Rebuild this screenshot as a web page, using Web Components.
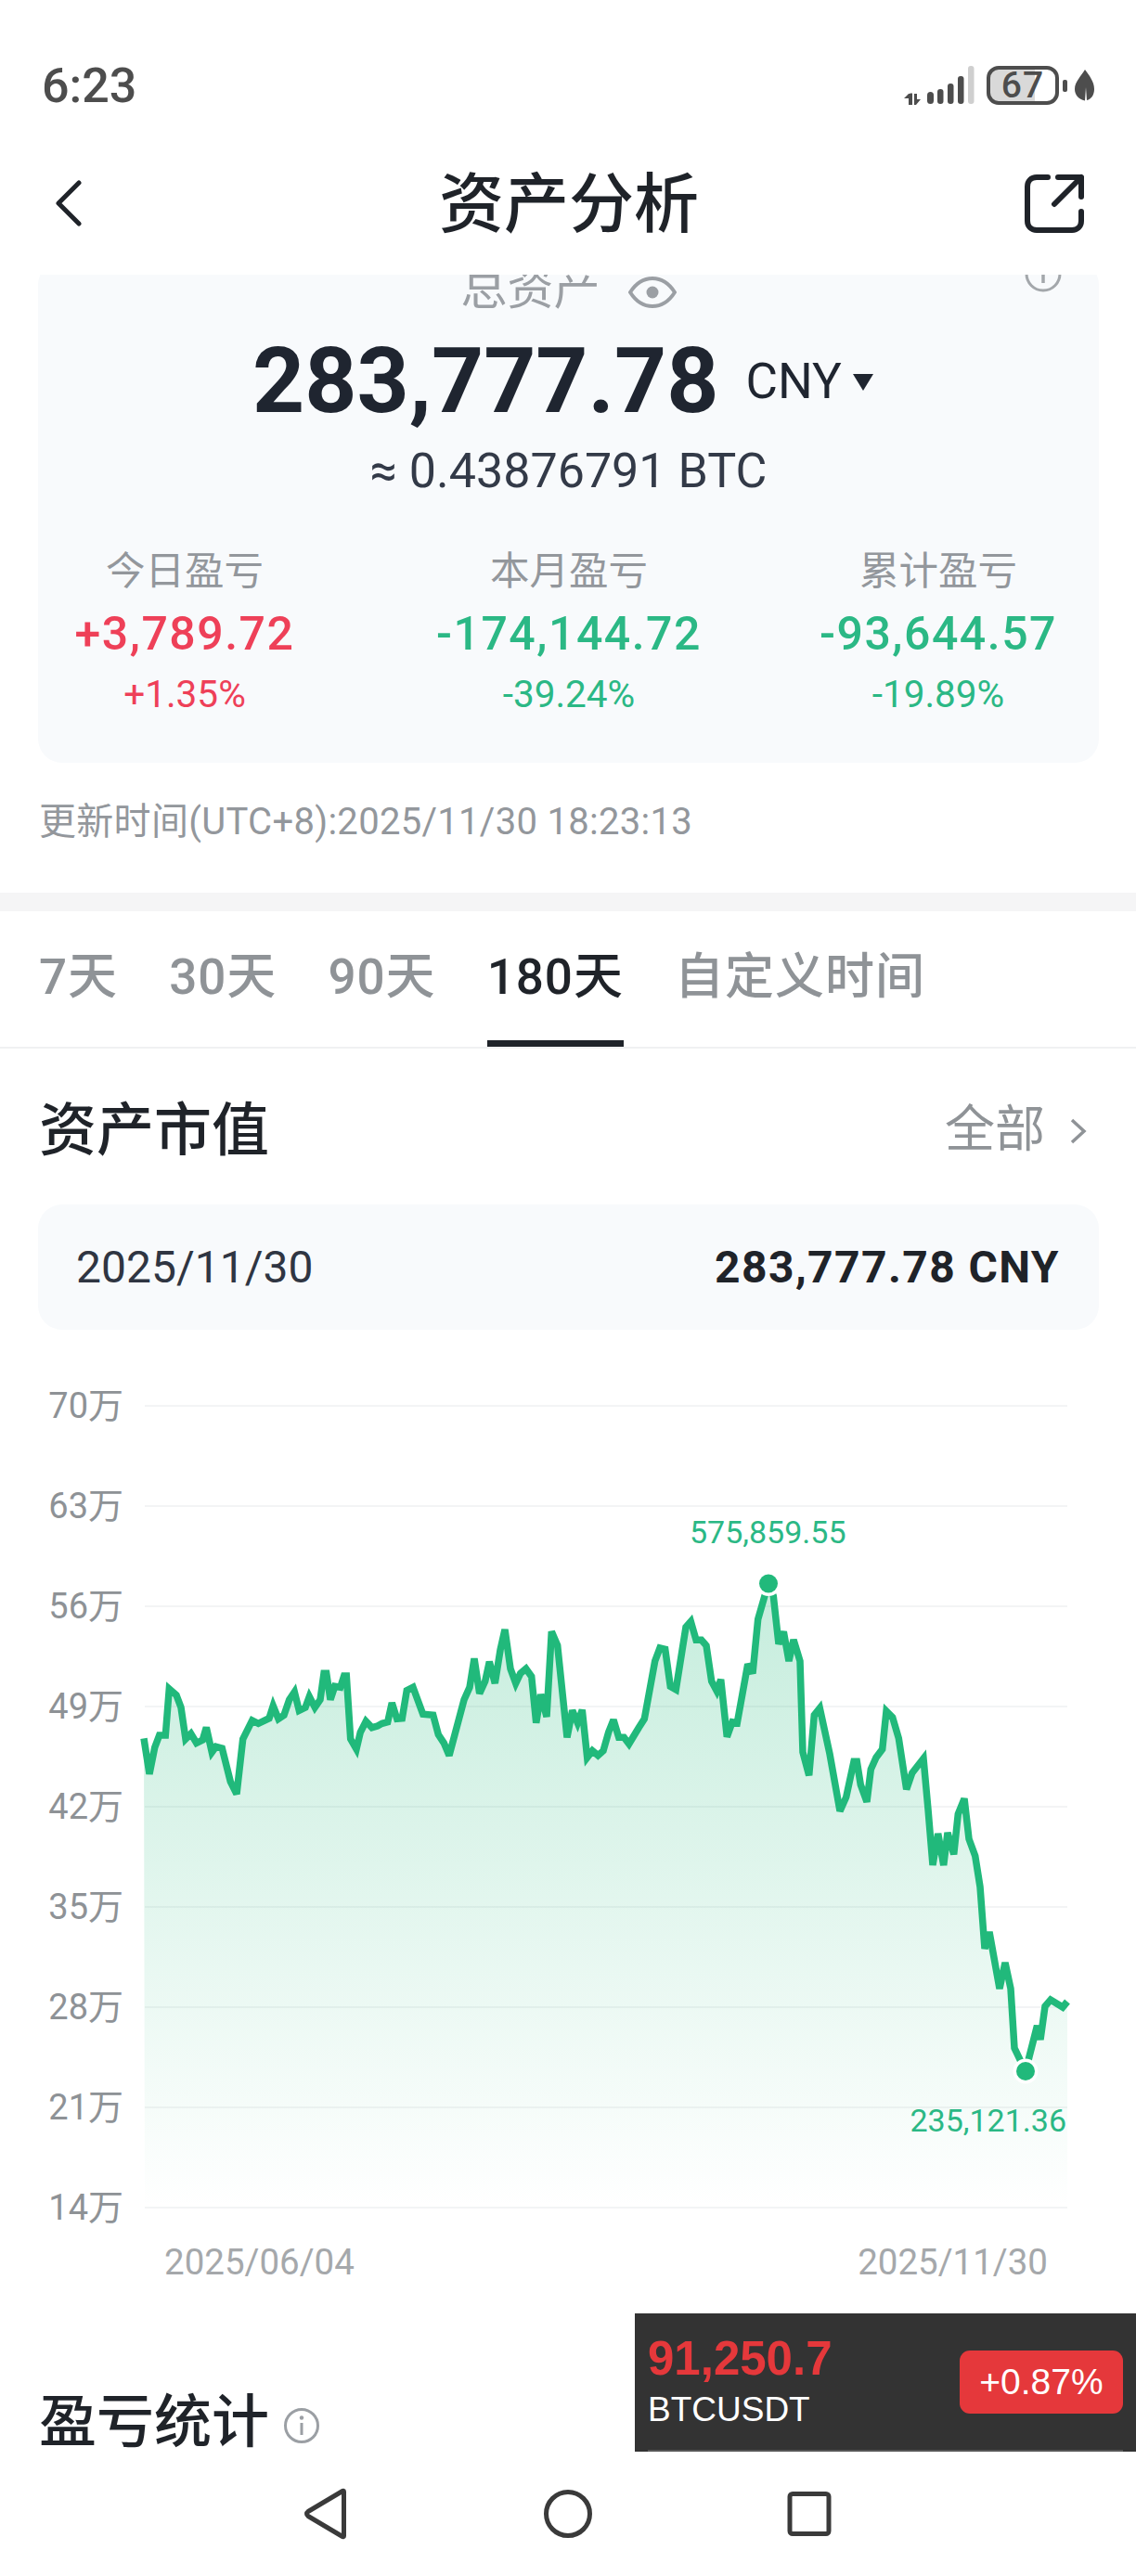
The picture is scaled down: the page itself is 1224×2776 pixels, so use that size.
<!DOCTYPE html>
<html lang="zh-CN">
<head>
<meta charset="utf-8">
<title>资产分析</title>
<style>
  html, body { margin: 0; padding: 0; background: #fff; }
  body {
    width: 1224px;
    height: 2776px;
    overflow: hidden;
    font-family: Roboto, "Noto Sans CJK SC", sans-serif;
    color: #1f2329;
  }
  asset-page { height: 2776px; }
</style>
</head>
<body>
<asset-page>
  <status-bar time="6:23" battery="67"></status-bar>
  <nav-header>资产分析</nav-header>

  <scroll-area>
    <summary-card>
      <stat-item slot="stats" tone="up" label="今日盈亏" value="+3,789.72" pct="+1.35%"></stat-item>
      <stat-item slot="stats" tone="down" label="本月盈亏" value="-174,144.72" pct="-39.24%"></stat-item>
      <stat-item slot="stats" tone="down" label="累计盈亏" value="-93,644.57" pct="-19.89%"></stat-item>
    </summary-card>
    <update-time>更新时间(UTC+8):2025/11/30 18:23:13</update-time>
    <range-tabs active="3">
      <span>7天</span><span>30天</span><span>90天</span><span>180天</span><span>自定义时间</span>
    </range-tabs>
    <section-title more="全部" style="margin-top:49px">资产市值</section-title>
    <value-row date="2025/11/30" value="283,777.78 CNY"></value-row>
    <asset-chart></asset-chart>
    <section-title info="true" style="height:64px;margin-top:116px">盈亏统计</section-title>
  </scroll-area>

  <ticker-float price="91,250.7" symbol="BTCUSDT" change="+0.87%"></ticker-float>
  <system-nav></system-nav>
</asset-page>

<script>
class AssetPage extends HTMLElement {
  constructor() {
    super();
    this.attachShadow({ mode: "open" });
  }
  connectedCallback() {
    this.shadowRoot.innerHTML = `
      <style>
        :host { display: flex; flex-direction: column; position: relative; width: 1224px; background: #fff; overflow: hidden; }
      </style>
      <slot></slot>
    `;
  }
}

class StatusBar extends HTMLElement {
  constructor() {
    super();
    this.attachShadow({ mode: "open" });
  }
  connectedCallback() {
    const time = this.getAttribute("time");
    const battery = this.getAttribute("battery");
    this.shadowRoot.innerHTML = `
      <style>
        :host { display: flex; align-items: center; justify-content: space-between; box-sizing: border-box; height: 142px; padding: 44px 45px 0 45px; color: #4d4d4d; }
        .time { font-size: 52px; font-weight: 500; line-height: 98px; }
        .right { display: flex; align-items: center; margin-top: -2px; }
        .batt {
          box-sizing: border-box; width: 78px; height: 42px; margin-left: 13px; border: 4px solid #4d4d4d; border-radius: 13px;
          background: linear-gradient(to right, #d9d9d9 0 69%, #fff 69% 100%);
          display: flex; align-items: center; justify-content: center;
          font-size: 39px; font-weight: 500; line-height: 34px; letter-spacing: 1px;
        }
      </style>
      <div class="time">${time}</div>
      <div class="right">
        <svg width="76" height="42" viewBox="0 0 76 42">
          <g fill="#4d4d4d">
            <path d="M0 35l5-5h1.500v-0.500h2.500v12.500h-4v-7z"/>
            <path d="M11 30h3v6l4 0-5 6h-2z"/>
            <rect x="25" y="28" width="7" height="13" rx="3.500"/>
            <rect x="36" y="25" width="6.500" height="16" rx="3"/>
            <rect x="47" y="19" width="6.500" height="22" rx="3"/>
            <rect x="58" y="11" width="6.500" height="30" rx="3"/>
          </g>
          <rect x="69" y="0" width="6.500" height="41" rx="3" fill="#cfcfcf"/>
        </svg>
        <div class="batt">${battery}</div>
        <svg width="34" height="36" viewBox="0 0 34 36" style="margin-left:4px">
          <rect x="0" y="12" width="5" height="13" rx="2" fill="#4d4d4d"/>
          <path d="M24 1C29 8 34 14 34 22c0 6-3 11-8 12l-1-14-1 14.500C17 33 13 28 13 22 13 14 20 8 24 1z" fill="#4d4d4d"/>
        </svg>
      </div>
    `;
  }
}

class NavHeader extends HTMLElement {
  constructor() {
    super();
    this.attachShadow({ mode: "open" });
  }
  connectedCallback() {
    this.shadowRoot.innerHTML = `
      <style>
        :host { display: grid; grid-template-columns: 1fr auto 1fr; align-items: center; box-sizing: border-box; height: 154px; padding: 0 56px 0 58px; background: #fff; position: relative; z-index: 1; }
        .title { font-size: 70px; font-weight: 500; line-height: 90px; margin-top: 4px; color: #1f2329; }
        svg { display: block; }
        .share { justify-self: end; }
      </style>
      <svg width="32" height="50" viewBox="0 0 32 50"><path d="M27 3L5 25l22 22" fill="none" stroke="#1f2329" stroke-width="5" stroke-linecap="round" stroke-linejoin="round"/></svg>
      <div class="title"><slot></slot></div>
      <svg class="share" width="64" height="64" viewBox="0 0 64 64">
        <path d="M25 4H13C7 4 3 8 3 14v37c0 6 4 10 10 10h38c6 0 10-4 10-10V41" fill="none" stroke="#1f2329" stroke-width="6" stroke-linecap="round"/>
        <path d="M36 4h25v21M61 4L32 33" fill="none" stroke="#1f2329" stroke-width="6" stroke-linecap="round" stroke-linejoin="round"/>
      </svg>
    `;
  }
}

class ScrollArea extends HTMLElement {
  constructor() {
    super();
    this.attachShadow({ mode: "open" });
  }
  connectedCallback() {
    this.shadowRoot.innerHTML = `
      <style>
        :host { display: block; height: 2346px; }
      </style>
      <slot></slot>
    `;
  }
}

class SummaryCard extends HTMLElement {
  constructor() {
    super();
    this.attachShadow({ mode: "open" });
  }
  connectedCallback() {
    this.shadowRoot.innerHTML = `
      <style>
        :host { display: block; position: relative; box-sizing: border-box; margin: -15px 40px 0 41px; height: 541px; background: #f8fafc; border-radius: 26px; text-align: center; }
        .head { display: flex; align-items: center; justify-content: center; height: 60px; font-size: 50px; line-height: 60px; color: #9b9fa4; }
        .head svg { margin-left: 30px; margin-top: 8px; }
        .tip { position: absolute; top: -6px; right: 40px; }
        .amount { display: flex; align-items: center; justify-content: center; height: 120px; margin-top: 10px; padding-right: 12px; line-height: 120px; color: #1f2530; }
        .big { font-size: 98px; font-weight: 700; }
        .cny { font-size: 53px; margin-left: 29px; }
        .tri { display: inline-block; width: 0; height: 0; margin-left: 12px; border-left: 11px solid transparent; border-right: 11px solid transparent; border-top: 18px solid #1f2530; position: relative; top: 1px; }
        .btc { height: 60px; margin-top: 7px; font-size: 52px; line-height: 60px; color: #333a48; }
        .stats { display: grid; grid-template-columns: 316px 512px 284px; margin-top: 48px; }
      </style>
      <div class="head">总资产
        <svg width="52" height="36" viewBox="0 0 52 36"><path d="M2 18C9 7 17 3 26 3s17 4 24 15c-7 11-15 15-24 15S9 29 2 18z" fill="none" stroke="#9b9fa4" stroke-width="4"/><circle cx="26" cy="18" r="6.500" fill="#9b9fa4"/></svg>
      </div>
      <svg class="tip" width="40" height="40" viewBox="0 0 40 40"><circle cx="20" cy="20" r="18" fill="none" stroke="#a3a7ab" stroke-width="3"/><path d="M20 17v13" stroke="#a3a7ab" stroke-width="3.500"/></svg>
      <div class="amount"><span class="big">283,777.78</span><span class="cny">CNY</span><span class="tri"></span></div>
      <div class="btc">≈ 0.43876791 BTC</div>
      <div class="stats"><slot name="stats"></slot></div>
    `;
  }
}

class StatItem extends HTMLElement {
  constructor() {
    super();
    this.attachShadow({ mode: "open" });
  }
  connectedCallback() {
    const label = this.getAttribute("label");
    const value = this.getAttribute("value");
    const pct = this.getAttribute("pct");
    const color = this.getAttribute("tone") == "up" ? "#ee4058" : "#2bb885";
    this.shadowRoot.innerHTML = `
      <style>
        :host { display: block; text-align: center; }
        .label { height: 60px; font-size: 42.500px; line-height: 60px; color: #93979c; }
        .value { height: 70px; margin-top: 2px; font-size: 50px; font-weight: 500; line-height: 70px; letter-spacing: 1.500px; color: ${color}; }
        .pct { height: 50px; margin-top: 5px; font-size: 40.500px; line-height: 50px; color: ${color}; }
      </style>
      <div class="label">${label}</div>
      <div class="value">${value}</div>
      <div class="pct">${pct}</div>
    `;
  }
}

class UpdateTime extends HTMLElement {
  constructor() {
    super();
    this.attachShadow({ mode: "open" });
  }
  connectedCallback() {
    this.shadowRoot.innerHTML = `
      <style>
        :host { display: block; height: 50px; margin-top: 39px; padding-bottom: 51px; border-bottom: 20px solid #f5f5f6; padding-left: 42px; font-size: 40px; letter-spacing: 0.300px; line-height: 50px; color: #93979c; }
      </style>
      <slot></slot>
    `;
  }
}

class RangeTabs extends HTMLElement {
  constructor() {
    super();
    this.attachShadow({ mode: "open" });
  }
  connectedCallback() {
    const active = Number(this.getAttribute("active"));
    const items = Array.from(this.querySelectorAll("span"));
    const tabs = items.map((item, i) => `<div class="tab ${i == active ? "on" : ""}">${item.textContent}</div>`).join("");
    this.shadowRoot.innerHTML = `
      <style>
        :host { display: flex; gap: 55px; box-sizing: border-box; height: 148px; padding: 0 42px; border-bottom: 2px solid #f0f1f2; }
        .tab { box-sizing: border-box; height: 146px; padding-top: 41px; font-size: 53px; letter-spacing: 1px; font-weight: 500; line-height: 60px; color: #8f9397; }
        .tab.on { color: #1f2329; border-bottom: 7px solid #1f2329; }
      </style>
      ${tabs}
    `;
  }
}

class SectionTitle extends HTMLElement {
  constructor() {
    super();
    this.attachShadow({ mode: "open" });
  }
  connectedCallback() {
    const more = this.getAttribute("more");
    const info = this.getAttribute("info");
    let more_html = "";
    if (more) {
      more_html = `<div class="more">${more}<svg width="20" height="30" viewBox="0 0 20 30"><path d="M3 3l13 12L3 27" fill="none" stroke="#8f9397" stroke-width="3.500"/></svg></div>`;
    }
    let info_html = "";
    if (info == "true") {
      info_html = `<svg class="info" width="40" height="40" viewBox="0 0 40 40"><circle cx="20" cy="20" r="17.500" fill="none" stroke="#9b9fa4" stroke-width="3"/><circle cx="20" cy="11.500" r="2.200" fill="#9b9fa4"/><path d="M20 17v13" stroke="#9b9fa4" stroke-width="3"/></svg>`;
    }
    this.shadowRoot.innerHTML = `
      <style>
        :host { display: flex; align-items: center; justify-content: space-between; height: 80px; padding: 0 50px 0 42px; }
        .left { display: flex; align-items: center; font-size: 62px; font-weight: 500; line-height: 64px; color: #1f2329; }
        .info { margin-left: 15px; margin-top: 6px; }
        .more { display: flex; align-items: center; font-size: 54px; line-height: 64px; color: #8f9397; margin-top: -3px; }
        .more svg { margin-left: 26px; margin-right: 2px; margin-top: 3px; }
      </style>
      <div class="left"><slot></slot>${info_html}</div>
      ${more_html}
    `;
  }
}

class ValueRow extends HTMLElement {
  constructor() {
    super();
    this.attachShadow({ mode: "open" });
  }
  connectedCallback() {
    this.shadowRoot.innerHTML = `
      <style>
        :host { display: flex; align-items: center; justify-content: space-between; box-sizing: border-box; height: 135px; margin: 39px 40px 0 41px; padding: 0 42px 0 41px; background: #f8fafc; border-radius: 26px; font-size: 48px; }
        .date { color: #2f3542; }
        .val { font-weight: 700; letter-spacing: 1.400px; color: #1f2329; }
      </style>
      <div class="date">${this.getAttribute("date")}</div>
      <div class="val">${this.getAttribute("value")}</div>
    `;
  }
}

// points traced from the reference, per crop, then mapped to page coords
const part_a = [[15,460],[33,575],[50,490],[65,450],[85,450],[97,300],[120,320],[135,360],[150,462],[167,445],[185,475],[205,465],[217,425],[235,505],[248,487],[268,492],[295,600],[315,640],[335,462],[365,402],[385,412],[420,395],[433,355],[450,397],[468,385],[485,335],[502,310],[517,370],[537,360],[550,325],[568,360],[585,335],[597,250],[605,250],[618,335],[632,292],[650,295],[662,258],[670,258],[683,462],[702,495],[715,440],[733,405],[752,425],[770,420],[785,412],[803,407],[817,345],[833,397],[850,395],[865,305],[885,295],[917,382],[950,385],[967,448],[985,475],[1002,515],[1050,335]]
  .map(([x, y]) => [150 + x / 3, 1720 + y / 3]);
const part_b = [[18,385],[33,292],[50,405],[68,365],[82,302],[100,372],[117,265],[132,198],[150,325],[167,372],[182,340],[200,325],[218,350],[233,500],[248,408],[267,480],[283,205],[302,250],[333,547],[350,460],[367,500],[382,458],[398,612],[415,590],[433,605],[450,590],[467,530],[483,490],[500,547],[517,547],[533,568],[565,515],[583,487],[617,300],[633,258],[650,262],[667,382],[685,392],[717,190],[733,172],[750,232],[767,232],[783,250],[800,365],[817,397],[830,360],[850,545],[867,497],[883,500],[917,310],[933,340],[950,165],[983,50],[1000,90],[1017,245],[1033,205],[1050,300]]
  .map(([x, y]) => [500 + x / 3, 1690 + y / 3]);
const part_c = [[855,1767],[862,1790]];
const part_d = [[135,205],[155,280],[172,85],[190,62],[222,210],[255,395],[275,350],[300,235],[310,235],[322,310],[342,365],[355,260],[372,222],[392,195],[405,72],[425,92],[445,160],[470,325],[488,272],[525,225],[540,390],[555,570],[572,468],[590,570],[603,465],[623,535],[637,405],[657,355],[672,485],[692,540],[708,640]]
  .map(([x, y]) => [820 + x / 3, 1820 + y / 3]);
const part_e = [[1061,2100],[1066,2082],[1077,2143],[1083,2115],[1089,2143],[1093,2207],[1105,2232],[1117.5,2183],[1121,2198],[1126,2162],[1132,2155],[1145,2163],[1150,2157]];
const CHART_POINTS = part_a.concat(part_b, part_c, part_d, part_e);

class AssetChart extends HTMLElement {
  constructor() {
    super();
    this.attachShadow({ mode: "open" });
  }
  connectedCallback() {
    const ticks = ["70万", "63万", "56万", "49万", "42万", "35万", "28万", "21万", "14万"];
    const line = CHART_POINTS.map((p) => p[0].toFixed(1) + "," + p[1].toFixed(1)).join(" ");
    const area = "156,2379 " + line + " 1150,2379";
    const grid = ticks.map((t, i) => {
      const y = 1515 + i * 108;
      return `<line x1="156" x2="1150" y1="${y}" y2="${y}" stroke="#f3f4f5" stroke-width="2"/>`;
    }).join("");
    this.shadowRoot.innerHTML = `
      <style>
        :host { display: block; margin-top: 62px; }
        .plot { display: grid; position: relative; height: 904px; }
        .plot > * { grid-area: 1 / 1; }
        svg { display: block; width: 1224px; height: 904px; overflow: visible; }
        .axis { display: flex; flex-direction: column; justify-content: space-between; width: 133px; text-align: right; }
        .axis div { height: 40px; font-size: 38px; line-height: 40px; color: #8e9296; }
        .mark { position: absolute; font-size: 34px; line-height: 40px; color: #2bb885; white-space: nowrap; }
        .hi { left: 743px; top: 136px; }
        .lo { right: 75px; top: 770px; }
        .dates { display: flex; justify-content: space-between; height: 50px; margin-top: 14px; padding: 0 95px 0 177px; font-size: 38.500px; line-height: 50px; color: #a5a8ab; }
      </style>
      <div class="plot">
        <svg viewBox="0 1495 1224 904">
          <defs>
            <linearGradient id="fade" gradientUnits="userSpaceOnUse" x1="0" y1="1706" x2="0" y2="2379">
              <stop offset="0" stop-color="#20b97a" stop-opacity="0.26"/>
              <stop offset="1" stop-color="#20b97a" stop-opacity="0"/>
            </linearGradient>
          </defs>
          ${grid}
          <polygon points="${area}" fill="url(#fade)"/>
          <polyline points="${line}" fill="none" stroke="#21b97b" stroke-width="7.500" stroke-linejoin="miter" stroke-miterlimit="3"/>
          <circle cx="828" cy="1706.500" r="13.500" fill="#fff"/>
          <circle cx="828" cy="1706.500" r="10" fill="#21b97b"/>
          <circle cx="1105" cy="2232" r="13.500" fill="#fff"/>
          <circle cx="1105" cy="2232" r="10" fill="#21b97b"/>
        </svg>
        <div class="axis">${ticks.map((t) => `<div>${t}</div>`).join("")}</div>
        <div class="mark hi">575,859.55</div>
        <div class="mark lo">235,121.36</div>
      </div>
      <div class="dates"><span>2025/06/04</span><span>2025/11/30</span></div>
    `;
  }
}

class TickerFloat extends HTMLElement {
  constructor() {
    super();
    this.attachShadow({ mode: "open" });
  }
  connectedCallback() {
    this.shadowRoot.innerHTML = `
      <style>
        :host { position: absolute; left: 684px; top: 2493px; z-index: 2; box-sizing: border-box; display: flex; align-items: flex-start; justify-content: space-between; width: 540px; height: 149px; padding: 40px 14px 0 14px; background: #333; font-family: "Liberation Sans", Arial, sans-serif; }
        .line { position: absolute; left: 14px; right: 14px; bottom: 0; height: 2px; background: #555; }
        .price { font-size: 51px; font-weight: 700; line-height: 50px; height: 50px; margin-top: -16px; margin-bottom: 8px; color: #e5383b; }
        .sym { font-size: 37px; line-height: 44px; color: #fff; }
        .chg { box-sizing: border-box; width: 176px; height: 68px; border-radius: 11px; background: #e5383b; color: #fff; font-size: 39px; line-height: 68px; text-align: center; }
      </style>
      <div>
        <div class="price">${this.getAttribute("price")}</div>
        <div class="sym">${this.getAttribute("symbol")}</div>
      </div>
      <div class="chg">${this.getAttribute("change")}</div>
      <div class="line"></div>
    `;
  }
}

class SystemNav extends HTMLElement {
  constructor() {
    super();
    this.attachShadow({ mode: "open" });
  }
  connectedCallback() {
    this.shadowRoot.innerHTML = `
      <style>
        :host { display: flex; align-items: center; justify-content: center; gap: 205px; height: 134px; padding-right: 6px; box-sizing: border-box; background: #fff; position: relative; z-index: 1; }
        svg { display: block; }
      </style>
      <svg width="56" height="60" viewBox="0 0 56 60"><path d="M49.500 6C49.500 5 48.500 5 48 5.500L11 27.500c-2 1.500-2 3.500 0 5L48 54.500c.5.500 1.500.5 1.500-.5z" fill="none" stroke="#3a3a3a" stroke-width="5" stroke-linejoin="round"/></svg>
      <svg width="60" height="60" viewBox="0 0 60 60"><circle cx="30" cy="30" r="23.500" fill="none" stroke="#3a3a3a" stroke-width="5"/></svg>
      <svg width="50" height="50" viewBox="0 0 50 50"><rect x="4" y="3.500" width="42" height="43" rx="3" fill="none" stroke="#3a3a3a" stroke-width="5"/></svg>
    `;
  }
}

window.customElements.define("asset-page", AssetPage);
window.customElements.define("status-bar", StatusBar);
window.customElements.define("nav-header", NavHeader);
window.customElements.define("scroll-area", ScrollArea);
window.customElements.define("summary-card", SummaryCard);
window.customElements.define("stat-item", StatItem);
window.customElements.define("update-time", UpdateTime);
window.customElements.define("range-tabs", RangeTabs);
window.customElements.define("section-title", SectionTitle);
window.customElements.define("value-row", ValueRow);
window.customElements.define("asset-chart", AssetChart);
window.customElements.define("ticker-float", TickerFloat);
window.customElements.define("system-nav", SystemNav);
</script>
</body>
</html>
